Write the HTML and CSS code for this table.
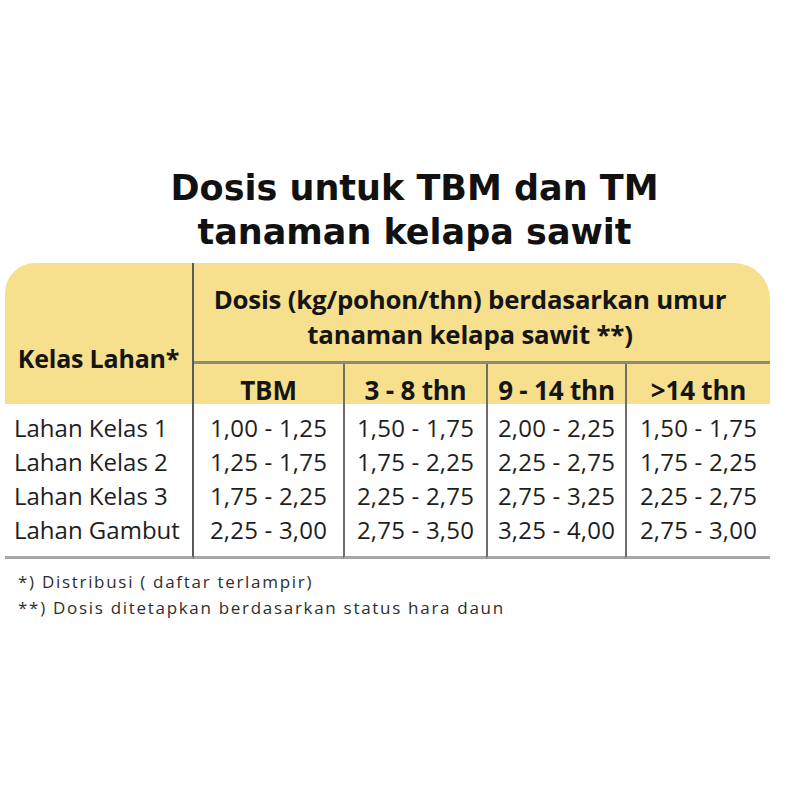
FILE: index.html
```html
<!DOCTYPE html>
<html lang="id">
<head>
<meta charset="utf-8">
<title>Dosis untuk TBM dan TM tanaman kelapa sawit</title>
<link rel="stylesheet" href="styles.css">
</head>
<body>
<div class="page">
  <h1 class="title">Dosis untuk TBM dan TM<br>tanaman kelapa sawit</h1>
  <table class="dose">
    <colgroup>
      <col class="c0"><col class="c1"><col class="c2"><col class="c3"><col class="c4">
    </colgroup>
    <thead>
      <tr class="h1">
        <th class="kelas" rowspan="2">Kelas Lahan*</th>
        <th class="dosis" colspan="4">Dosis (kg/pohon/thn) berdasarkan umur<br>tanaman kelapa sawit **)</th>
      </tr>
      <tr class="h2">
        <th>TBM</th>
        <th class="sep">3 - 8 thn</th>
        <th class="sep">9 - 14 thn</th>
        <th class="sep last">&gt;14 thn</th>
      </tr>
    </thead>
    <tbody>
      <tr class="first">
        <td class="name">Lahan Kelas 1</td><td class="num">1,00 - 1,25</td><td class="num sep">1,50 - 1,75</td><td class="num sep">2,00 - 2,25</td><td class="num sep">1,50 - 1,75</td>
      </tr>
      <tr>
        <td class="name">Lahan Kelas 2</td><td class="num">1,25 - 1,75</td><td class="num sep">1,75 - 2,25</td><td class="num sep">2,25 - 2,75</td><td class="num sep">1,75 - 2,25</td>
      </tr>
      <tr>
        <td class="name">Lahan Kelas 3</td><td class="num">1,75 - 2,25</td><td class="num sep">2,25 - 2,75</td><td class="num sep">2,75 - 3,25</td><td class="num sep">2,25 - 2,75</td>
      </tr>
      <tr class="lastrow">
        <td class="name">Lahan Gambut</td><td class="num">2,25 - 3,00</td><td class="num sep">2,75 - 3,50</td><td class="num sep">3,25 - 4,00</td><td class="num sep">2,75 - 3,00</td>
      </tr>
    </tbody>
  </table>
  <div class="notes">
    <p>*) Distribusi ( daftar terlampir)</p>
    <p>**) Dosis ditetapkan berdasarkan status hara daun</p>
  </div>
</div>
</body>
</html>
```

FILE: styles.css
```css
html, body {
  margin: 0;
  padding: 0;
  background: #ffffff;
}

.page {
  width: 800px;
  height: 800px;
  padding-top: 166px;
  box-sizing: border-box;
}

.title {
  margin: 0 0 9px 0;
  padding-left: 29px;
  text-align: center;
  font-family: "DejaVu Sans", Verdana, sans-serif;
  font-weight: bold;
  font-size: 35px;
  line-height: 44px;
  color: #111111;
}

.dose {
  margin-left: 5px;
  width: 765px;
  border-collapse: separate;
  border-spacing: 0;
  table-layout: fixed;
  font-family: "Open Sans", "Noto Sans", sans-serif;
  color: #1e1e1e;
}

.c0 { width: 189px; }
.c1 { width: 149px; }
.c2 { width: 143px; }
.c3 { width: 139px; }
.c4 { width: 145px; }

.dose th {
  background: #f6df8d;
  font-weight: bold;
  font-size: 25px;
  color: #151515;
  padding: 0;
  letter-spacing: -0.2px;
}

.kelas {
  border-top-left-radius: 30px;
  border-right: 2px solid #5a5a5a;
  vertical-align: bottom;
  padding-bottom: 31px !important;
  text-align: center;
  line-height: 30px;
}

.dosis {
  border-top-right-radius: 36px;
  border-bottom: 3px solid #8f8a78;
  height: 101px;
  line-height: 35px;
  vertical-align: middle;
  padding-top: 10px !important;
  padding-right: 24px !important;
  box-sizing: border-box;
  font-size: 25.8px !important;
}

.h2 th {
  height: 40px;
  padding-top: 13px !important;
  line-height: 27px;
  vertical-align: top;
  font-size: 26px;
  box-sizing: border-box;
}

.dose th.sep,
.dose td.sep {
  border-left: 2px solid #6e6e6e;
}

.dose td {
  height: 34px;
  padding: 0;
  line-height: 34px;
  vertical-align: middle;
  font-size: 24px;
}

.dose td.name {
  text-align: left;
  padding-left: 9px;
  border-right: 2px solid #5a5a5a;
}

.dose td.num {
  text-align: center;
  font-size: 24px;
  letter-spacing: 0.2px;
}

.dose tr.first td {
  padding-top: 7px;
}

.dose tr.lastrow td {
  padding-bottom: 9px;
  border-bottom: 3px solid #a8a8a8;
}

.notes {
  margin-top: 10px;
  padding-left: 18px;
  font-family: "Open Sans", "Noto Sans", sans-serif;
  font-size: 17px;
  letter-spacing: 1.7px;
  color: #2e2e2e;
}

.notes p {
  margin: 0;
  line-height: 26px;
}
```
